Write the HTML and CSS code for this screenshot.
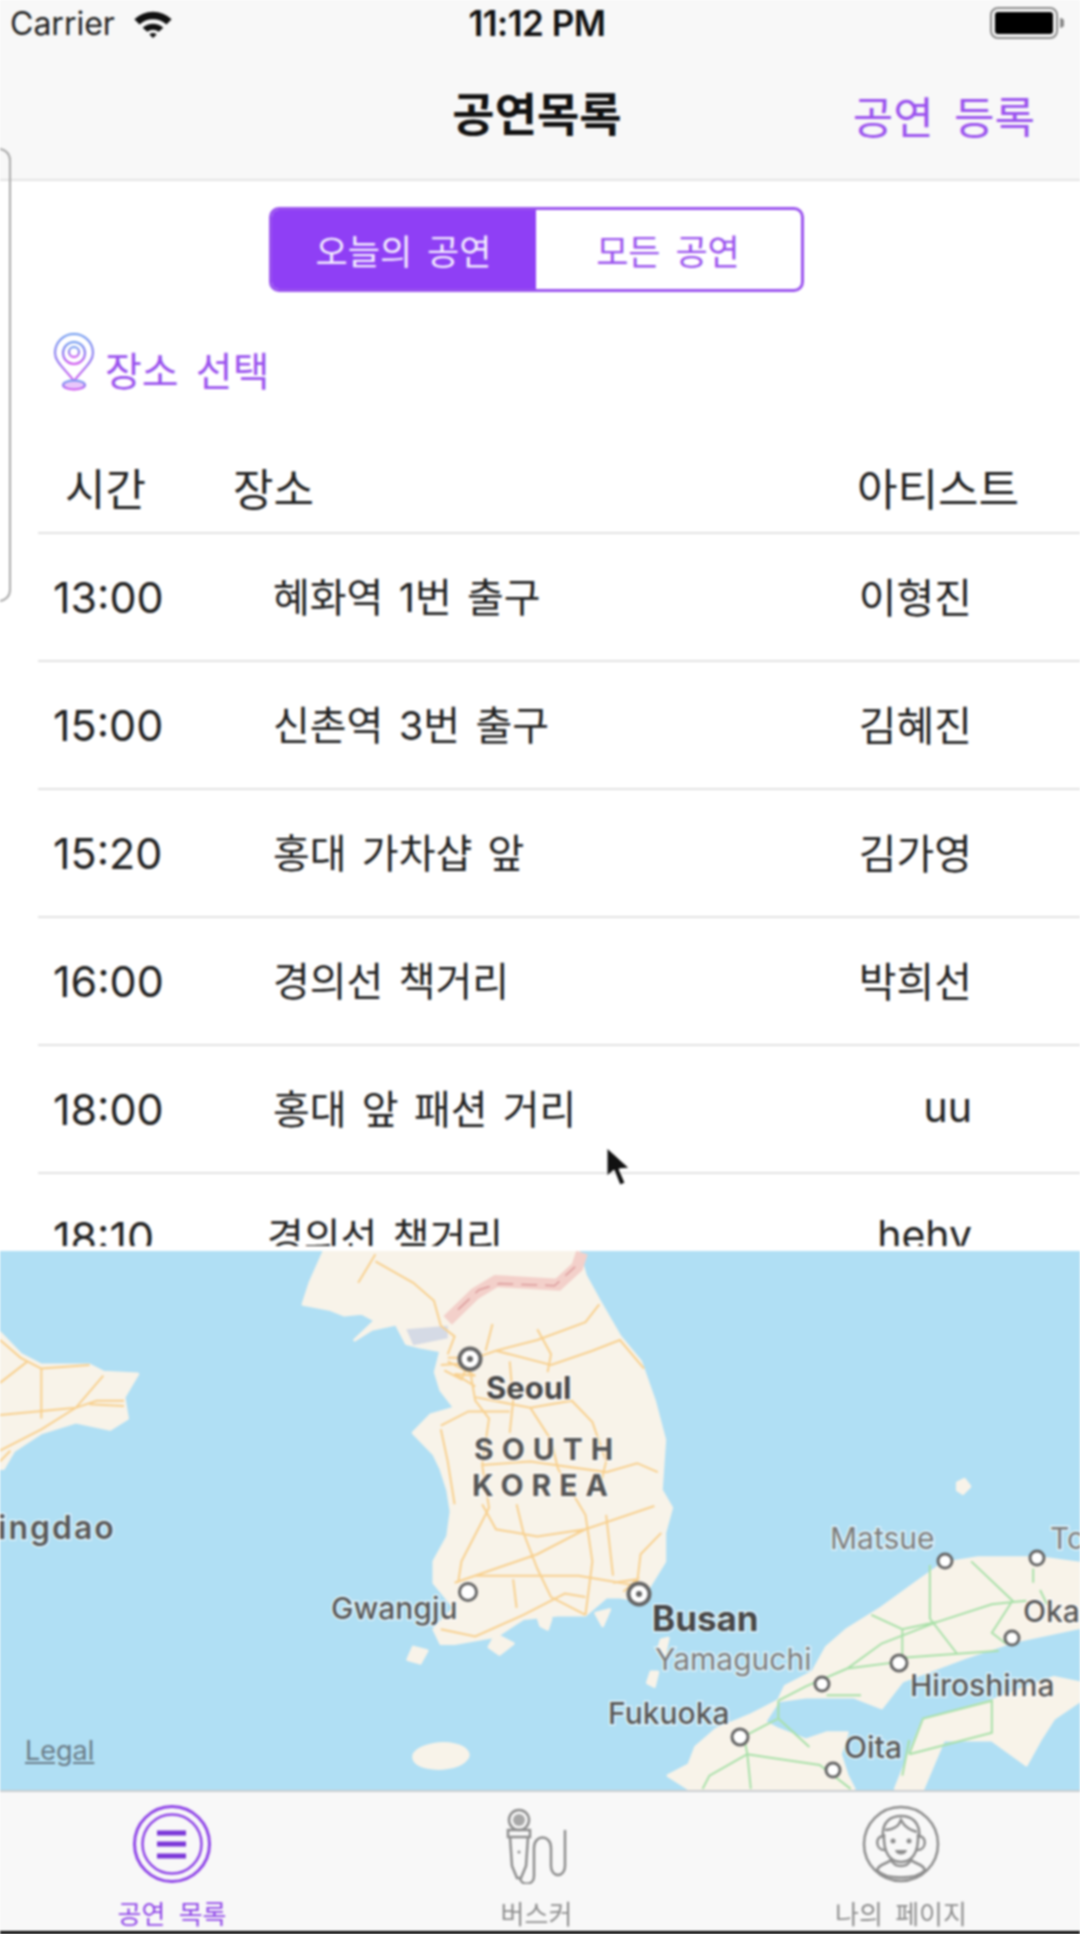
FILE: index.html
```html
<!DOCTYPE html>
<html lang="ko">
<head>
<meta charset="UTF-8">
<meta name="viewport" content="width=device-width, initial-scale=1.0">
<title>공연목록</title>
<link rel="stylesheet" href="styles.css">
</head>
<body>
<div class="screen">

  <!-- Status bar -->
  <div class="status-bar">
    <div class="status-left">
      <span>Carrier</span>
      <svg class="wifi" viewBox="0 0 40 28" width="42" height="29">
        <path d="M2 10 A26 26 0 0 1 38 10 L33 15 A19 19 0 0 0 7 15 Z"/>
        <path d="M10 18 A15 15 0 0 1 30 18 L25.500 22 A9 9 0 0 0 14.500 22 Z"/>
        <path d="M16.500 24.500 A5 5 0 0 1 23.500 24.500 L20 28 Z"/>
      </svg>
    </div>
    <div class="status-time">11:12 PM</div>
    <svg class="battery" viewBox="0 0 74 32" width="74" height="32">
      <rect x="1" y="1" width="66" height="30" rx="7" fill="none" stroke="#8a8a8a" stroke-width="2"/>
      <rect x="5" y="5" width="58" height="22" rx="3" fill="#000"/>
      <path d="M70 11 a5 5 0 0 1 0 10 z" fill="#8a8a8a"/>
    </svg>
  </div>

  <!-- Navigation bar -->
  <div class="nav-bar">
    <div class="nav-title">공연목록</div>
    <div class="nav-action">공연 등록</div>
  </div>

  <div class="content">
    <div class="segment">
      <div class="segment-item active">오늘의 공연</div>
      <div class="segment-item">모든 공연</div>
    </div>

    <div class="place-select">
      <svg class="pin" viewBox="0 0 42 58" width="42" height="58">
        <defs>
          <linearGradient id="pin-grad" x1="0" y1="0" x2="0" y2="1">
            <stop offset="0" stop-color="#6f9bf0"/>
            <stop offset="0.6" stop-color="#8f6cf0"/>
            <stop offset="1" stop-color="#d050f0"/>
          </linearGradient>
        </defs>
        <g fill="none" stroke="url(#pin-grad)" stroke-width="2">
          <path d="M21 48 C12 36 2 29 2 20 A19 19 0 0 1 40 20 C40 29 30 36 21 48 Z"/>
          <circle cx="21" cy="20" r="11"/>
          <circle cx="21" cy="19" r="5"/>
          <ellipse cx="21" cy="52" rx="11" ry="4.500" fill="#e9c6fb"/>
        </g>
      </svg>
      <span class="place-select-text">장소 선택</span>
    </div>

    <div class="table">
      <div class="table-head">
        <span class="head-time">시간</span>
        <span class="head-place">장소</span>
        <span class="head-artist">아티스트</span>
      </div>
      <div class="row"><span class="time">13:00</span><span class="place">혜화역 1번 출구</span><span class="artist">이형진</span></div>
      <div class="row"><span class="time">15:00</span><span class="place">신촌역 3번 출구</span><span class="artist">김혜진</span></div>
      <div class="row"><span class="time">15:20</span><span class="place">홍대 가차샵 앞</span><span class="artist">김가영</span></div>
      <div class="row"><span class="time">16:00</span><span class="place">경의선 책거리</span><span class="artist">박희선</span></div>
      <div class="row"><span class="time">18:00</span><span class="place">홍대 앞 패션 거리</span><span class="artist">uu</span></div>
      <div class="row row-last"><span class="time">18:10</span><span class="place">경의선 책거리</span><span class="artist">hehv</span></div>
    </div>
  </div>

  <!-- Map -->
  <div class="map">
    <svg class="map-svg" viewBox="0 0 1080 539" width="1080" height="539">
      <!-- traced from the 1568 wide crop, so everything in this group is scaled back -->
      <g transform="translate(0,-11) scale(0.6888,0.3571)">
        <g class="land">
          <path d="M470,33 L450,120 L440,180 L480,195 L500,210 L525,205 L545,225 L515,280 L540,250 L575,235 L590,290 L610,300 L640,310 L632,370 L640,420 L660,470 L625,490 L600,540 L630,600 L640,640 L650,700 L655,760 L650,830 L630,900 L630,960 L660,1030 L630,1090 L640,1130 L660,1130 L720,1110 L760,1060 L810,1050 L850,1050 L880,1000 L900,1000 L930,1010 L965,900 L965,820 L975,750 L960,700 L965,560 L950,450 L930,340 L900,270 L870,170 L850,100 L840,33 Z"/>
          <path d="M0,260 L30,320 L60,350 L130,350 L150,370 L200,375 L180,440 L185,500 L160,530 L110,510 L60,540 L20,590 L5,640 L0,640 Z"/>
          <path d="M1568,905 L1510,890 L1420,890 L1370,905 L1330,960 L1280,1030 L1230,1090 L1200,1140 L1180,1210 L1140,1250 L1130,1290 L1170,1280 L1240,1280 L1280,1310 L1310,1235 L1400,1170 L1470,1125 L1568,1085 Z"/>
          <path d="M1320,1440 L1340,1345 L1440,1290 L1530,1225 L1568,1240 L1568,1290 L1530,1340 L1510,1400 L1490,1470 L1440,1400 L1370,1400 L1340,1537 L1300,1537 Z"/>
          <path d="M1130,1290 L1090,1330 L1040,1370 L1010,1420 L1000,1470 L970,1500 L1000,1537 L1240,1537 L1230,1500 L1220,1440 L1230,1380 L1200,1380 L1170,1400 L1130,1370 L1110,1350 Z"/>
          <ellipse cx="640" cy="1445" rx="40" ry="34" transform="rotate(-18 640 1445)"/>
          <path d="M1390,680 L1400,670 L1408,690 L1398,710 L1390,700 Z"/>
          <path d="M945,1210 L955,1210 L950,1250 L940,1240 Z"/>
          <path d="M960,1120 L970,1115 L965,1160 L955,1150 Z"/>
          <path d="M600,1140 L620,1150 L610,1185 L592,1175 Z"/>
          <path d="M720,1105 L745,1130 L725,1160 L710,1140 Z"/>
          <path d="M780,1050 L800,1060 L795,1090 L785,1080 Z"/>
          <path d="M865,1045 L885,1035 L875,1080 Z"/>
        </g>
        <path class="dmz" d="M650,225 L690,150 L720,115 L810,125 L838,75 L845,35"/>
        <path class="dmz-line" d="M665,195 L695,140 L725,122 L805,128 L835,75"/>
        <path class="bay" d="M590,250 L650,240 L650,275 L600,295 Z"/>
        <path class="road" d="M545,40 L520,120 M545,60 L600,120 L630,170 L640,240 L660,270 L650,320 M715,235 L705,310 M650,330 L690,330 L720,310 L780,280 L850,230 L870,180 M780,250 L800,320 L795,370 M720,310 L800,350 L860,310 L900,280 L935,360 M680,340 L690,450 L710,500 L700,630 L710,750 L670,900 L665,960 M740,340 L745,450 L740,540 M690,440 L770,470 L830,450 L860,510 L880,620 L870,700 M640,520 L680,480 L740,480 M640,530 L650,620 L660,740 M700,630 L770,620 L880,650 L925,625 L955,650 M770,470 L800,560 L810,640 L850,770 L860,900 L850,1050 M700,740 L720,810 L780,830 L850,810 L950,745 M750,740 L760,820 L780,920 L800,1000 L850,1050 M660,960 L780,880 L850,810 M690,940 L840,940 L900,960 L930,970 M880,770 L890,940 M960,820 L930,880 L925,960 M640,1090 L690,1110 L760,1050 L820,990 L850,1000 M745,950 L750,1030 M640,350 L680,345 L670,390 L645,365 M650,340 L690,380 L660,375 L690,410 M890,960 L925,950 L905,985"/>
        <path class="road" d="M0,280 L30,330 L60,360 L60,500 M60,360 L130,350 M0,400 L40,340 M0,490 L110,470 L140,450 L180,450 M0,590 L60,530 L110,470 L150,380 M130,460 L180,465 M0,620 L15,590"/>
        <path class="rail" d="M1130,1290 L1170,1250 L1230,1200 L1280,1130 L1360,1070 L1440,1020 L1490,1010 M1350,910 L1350,1060 L1390,1160 M1410,900 L1470,1010 L1440,1100 L1460,1130 M1265,1050 L1310,1090 L1360,1070 M1310,1090 L1310,1180 L1230,1200 M1310,1170 L1450,1150 M1500,920 L1500,960 M1510,980 L1520,1020 M1200,1275 L1250,1275 M1130,1290 L1130,1340 L1080,1390 M1130,1340 L1175,1420 M1080,1390 L1085,1440 L1090,1537 M1085,1440 L1030,1500 L1020,1537 M1085,1440 L1190,1470 L1235,1537 M1320,1440 L1340,1340 L1440,1290 L1440,1380 L1320,1440 M1320,1400 L1310,1500"/>
      </g>

      <g class="city-big"><circle cx="470" cy="108" r="10.500"/><circle class="dot" cx="470" cy="108" r="3"/></g>
      <g class="city-big"><circle cx="639" cy="343" r="10.500"/><circle class="dot" cx="639" cy="343" r="3"/></g>
      <g class="city">
        <circle cx="468" cy="341" r="8.500"/>
        <circle cx="945" cy="310" r="7"/>
        <circle cx="1037" cy="307" r="7"/>
        <circle cx="1012" cy="387" r="7"/>
        <circle cx="899" cy="412" r="8"/>
        <circle cx="822" cy="433" r="7"/>
        <circle cx="740" cy="486" r="8"/>
        <circle cx="833" cy="519" r="7"/>
      </g>

      <text class="label label-dark" x="486" y="148">Seoul</text>
      <text class="label label-country" x="474" y="209">SOUTH</text>
      <text class="label label-country" x="472" y="245">KOREA</text>
      <text class="label label-qingdao" x="-2" y="288">ingdao</text>
      <text class="label label-mid" x="331" y="368">Gwangju</text>
      <text class="label label-dark label-big" x="652" y="380">Busan</text>
      <text class="label label-light" x="830" y="298">Matsue</text>
      <text class="label label-light" x="1050" y="298">To</text>
      <text class="label label-light" x="655" y="419">Yamaguchi</text>
      <text class="label label-mid" x="608" y="473">Fukuoka</text>
      <text class="label label-mid" x="910" y="445">Hiroshima</text>
      <text class="label label-mid" x="1023" y="371">Oka</text>
      <text class="label label-mid" x="844" y="507">Oita</text>
    </svg>
    <span class="legal">Legal</span>
  </div>

  <!-- Tab bar -->
  <div class="tab-bar">
    <div class="tab tab-active">
      <svg viewBox="0 0 80 80" width="80" height="80">
        <g fill="none" stroke="#8f45e8">
          <circle cx="40" cy="40" r="37.500" stroke-width="3"/>
          <circle cx="40" cy="40" r="29.500" stroke-width="2.500"/>
        </g>
        <path d="M25 29 H54 M25 40 H54 M25 52 H54" stroke="#7a35d8" stroke-width="5"/>
      </svg>
      <span class="tab-label">공연 목록</span>
    </div>
    <div class="tab">
      <svg viewBox="0 0 80 80" width="80" height="80">
        <g fill="none" stroke="#8e8e8e" stroke-width="2.500">
          <circle cx="22" cy="16" r="10"/>
          <path d="M11 26 H33 V33 H11 Z"/>
          <path d="M13 33 L15 62 L20 74 L24 74 L29 62 L31 33"/>
          <path d="M23 74 C24 82 37 82 37 72 V44 C37 30 54 30 54 44 V62 C54 74 68 74 68 62 V26"/>
        </g>
        <circle cx="22" cy="16" r="6" fill="#a8a8a8"/>
        <circle cx="22" cy="48" r="1.500" fill="#8e8e8e"/>
      </svg>
      <span class="tab-label">버스커</span>
    </div>
    <div class="tab">
      <svg viewBox="0 0 80 80" width="80" height="80">
        <g fill="none" stroke="#8e8e8e" stroke-width="2.500">
          <circle cx="40" cy="40" r="37"/>
          <path d="M22 34 C20 16 32 12 40 12 C50 12 60 18 58 34"/>
          <path d="M24 26 C32 26 38 22 40 16 C44 24 50 26 56 28"/>
          <path d="M22 32 C14 32 14 46 24 46 M58 32 C66 32 66 46 56 46"/>
          <path d="M23 30 C22 50 30 58 40 58 C50 58 58 50 57 30"/>
          <path d="M30 56 C26 60 18 60 16 66 C24 76 56 76 64 66 C62 60 54 60 50 56 C46 64 34 64 30 56 Z"/>
        </g>
        <circle cx="32" cy="37" r="2.500" fill="#8e8e8e"/>
        <circle cx="48" cy="37" r="2.500" fill="#8e8e8e"/>
        <path d="M34 46 H46 C45 52 35 52 34 46 Z" fill="#8e8e8e"/>
      </svg>
      <span class="tab-label tab-label-tight">나의 페이지</span>
    </div>
  </div>

  <div class="bottom-strip"></div>

  <!-- Left edge of a panel that lies over the page -->
  <div class="side-panel"></div>

  <!-- Mouse pointer -->
  <svg class="cursor" viewBox="0 0 24 40" width="24" height="40">
    <path d="M1 1 L1 29 L8 23 L14 38 L19 36 L13 22 L23 21 Z" fill="#111" stroke="#fff" stroke-width="1"/>
  </svg>
</div>
</body>
</html>
```

FILE: styles.css
```css
* {
  box-sizing: border-box;
}

body {
  margin: 0;
  background: #fff;
}

.screen {
  position: relative;
  display: flex;
  flex-direction: column;
  width: 1080px;
  height: 1934px;
  overflow: hidden;
  font-family: Inter, "Noto Sans CJK KR", sans-serif;
  color: #111;
  filter: blur(0.9px);
}

/* Status bar */
.status-bar {
  display: grid;
  grid-template-columns: 1fr auto 1fr;
  align-items: center;
  height: 46px;
  padding: 0 16px 0 10px;
  background: #f8f8f8;
  font-size: 32px;
}

.status-left {
  display: flex;
  align-items: center;
  gap: 17px;
  color: #222;
}

.wifi {
  fill: #111;
}

.status-time {
  font-weight: 600;
  font-size: 35px;
  letter-spacing: -0.5px;
}

.battery {
  justify-self: end;
}

/* Nav bar */
.nav-bar {
  display: flex;
  align-items: center;
  justify-content: center;
  position: relative;
  height: 135px;
  padding: 0 6px 4px 0;
  background: #f8f8f8;
  border-bottom: 2px solid #e4e4e4;
}

.nav-title {
  font-size: 46px;
  font-weight: 700;
}

.nav-action {
  position: absolute;
  right: 45px;
  top: 37px;
  font-size: 44px;
  word-spacing: 8px;
  color: #9a52ee;
}

/* Content */
.content {
  flex: 1;
  min-height: 0;
  display: flex;
  flex-direction: column;
  padding-bottom: 5px;
  background: #fff;
}

.segment {
  display: flex;
  align-self: center;
  width: 535px;
  height: 85px;
  margin-top: 26px;
  margin-left: -8px;
  border: 3px solid #9a52ee;
  border-radius: 10px;
  overflow: hidden;
}

.segment-item {
  display: flex;
  align-items: center;
  justify-content: center;
  font-size: 35px;
  word-spacing: 5px;
  color: #9a52ee;
  flex: 1;
}

.segment-item.active {
  flex: none;
  width: 264px;
  background: #8f3ff5;
  color: #f4eefe;
}

.place-select {
  display: flex;
  align-items: center;
  height: 58px;
  margin-top: 41px;
  padding-left: 53px;
  gap: 10px;
}

.place-select-text {
  margin-top: 14px;
  font-size: 40px;
  word-spacing: 6px;
  color: #9a52ee;
}

.table {
  flex: 1;
  min-height: 0;
  overflow: hidden;
  margin-left: 38px;
}

.table-head {
  display: flex;
  align-items: center;
  height: 143px;
  padding-top: 50px;
  border-bottom: 2px solid #e2e2e2;
  font-size: 44px;
  color: #222;
}

.head-time {
  margin-left: 27px;
  width: 168px;
}

.head-place {
  flex: 1;
}

.head-artist {
  margin-right: 61px;
}

.row {
  display: grid;
  grid-template-columns: 220px 1fr auto;
  align-items: center;
  height: 128px;
  padding: 0 108px 4px 15px;
  border-bottom: 2px solid #e2e2e2;
  font-size: 40px;
  color: #222;
}

.time {
  margin-top: 3px;
  font-size: 43px;
}

.place {
  word-spacing: 4px;
}

.artist {
  font-size: 41px;
  text-align: right;
}

.row-last .place {
  margin-left: -6px;
}

/* Map */
.map {
  position: relative;
  height: 539px;
  background: #b0dff4;
}

.map-svg {
  display: block;
}

.land path,
.land ellipse {
  fill: #f8f3e9;
  stroke: #f8f3e9;
  stroke-width: 3;
  stroke-linejoin: round;
  vector-effect: non-scaling-stroke;
}

.road,
.rail,
.dmz,
.dmz-line {
  fill: none;
  vector-effect: non-scaling-stroke;
}

.road {
  stroke: #f8d08e;
  stroke-width: 2;
}

.rail {
  stroke: #a8e0a8;
  stroke-width: 2;
}

.dmz {
  stroke: #f3d0ca;
  stroke-width: 12;
}

.dmz-line {
  stroke: #dc9c9c;
  stroke-width: 1.500;
  stroke-dasharray: 16 8;
}

.bay {
  fill: #c6cfe2;
  opacity: 0.7;
}

.city circle {
  fill: #fff;
  stroke: #666;
  stroke-width: 3;
}

.city-big circle {
  fill: #fff;
  stroke: #666;
  stroke-width: 4;
}

.city-big .dot {
  fill: #666;
  stroke: none;
}

.label {
  font-family: Inter, sans-serif;
  paint-order: stroke;
  stroke: rgba(255, 255, 255, 0.6);
  stroke-width: 3px;
}

.label-dark {
  font-size: 31px;
  font-weight: 700;
  fill: #474747;
}

.label-big {
  font-size: 35px;
}

.label-country {
  font-size: 30px;
  font-weight: 700;
  letter-spacing: 8px;
  fill: #555;
}

.label-qingdao {
  font-size: 32px;
  font-weight: 600;
  letter-spacing: 2px;
  fill: #585858;
}

.label-mid {
  font-size: 30px;
  font-weight: 500;
  fill: #585858;
}

.label-light {
  font-size: 30px;
  fill: #7c7c7c;
}

.legal {
  position: absolute;
  left: 25px;
  top: 483px;
  font-size: 27px;
  color: #6a7c88;
  text-decoration: underline;
}

/* Tab bar */
.tab-bar {
  display: flex;
  justify-content: space-between;
  height: 141px;
  padding: 12px 139px 0 132px;
  background: #f8f8f8;
  border-top: 2px solid #c9cdd0;
}

.tab {
  display: flex;
  flex-direction: column;
  align-items: center;
  width: 80px;
  gap: 10px;
  color: #8e8e8e;
}

.tab-active {
  color: #8f45e8;
}

.tab-label {
  font-size: 26px;
  word-spacing: 6px;
  white-space: nowrap;
}

.tab-label-tight {
  word-spacing: 5px;
}

.bottom-strip {
  height: 3px;
  background: #000;
}

/* Overlays */
.side-panel {
  position: absolute;
  left: -20px;
  top: 148px;
  width: 31px;
  height: 454px;
  border: 2px solid #a9a9a9;
  border-radius: 12px;
}

.cursor {
  position: absolute;
  left: 606px;
  top: 1147px;
}
```
